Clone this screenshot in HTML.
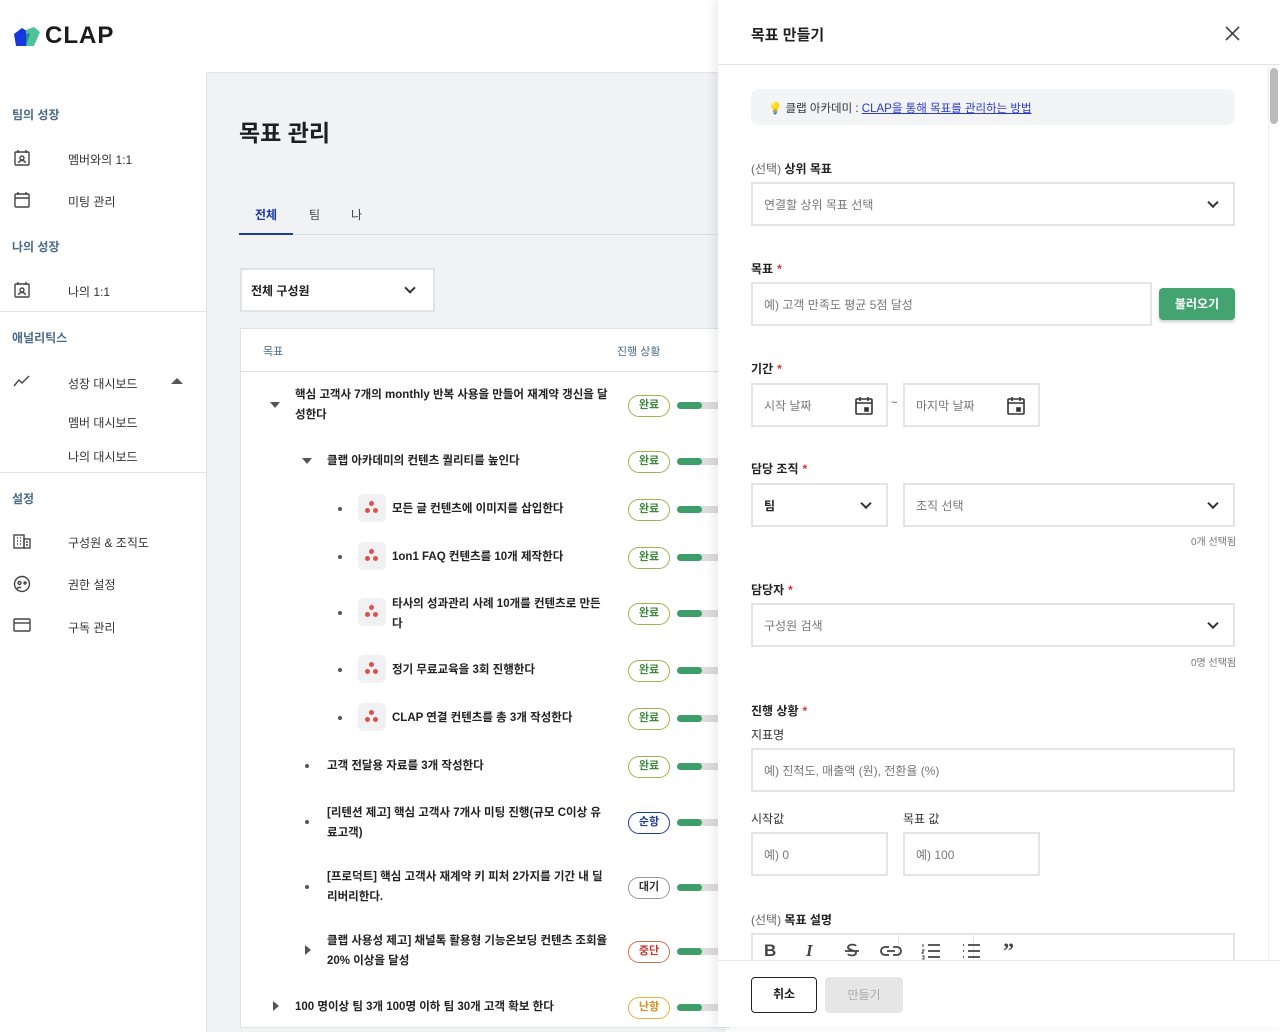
<!DOCTYPE html>
<html><head><meta charset="utf-8"><style>
*{margin:0;padding:0;box-sizing:border-box}
body{width:1280px;height:1027px;overflow:hidden;position:relative;background:#fff;font-family:"Liberation Sans","Noto Sans CJK KR",sans-serif;color:#222}
.a{position:absolute;white-space:nowrap}
.sec{font-size:12px;font-weight:bold;color:#4a6a8a;left:12px}
.nav{font-size:12px;color:#333;left:68px}
.ic{position:absolute;left:13px}
.t{font-size:11.5px;font-weight:bold;color:#222}
.badge{position:absolute;left:628px;width:42px;height:22px;border:1.5px solid #9bb54a;border-radius:11px;font-size:11px;font-weight:bold;color:#3c8a3c;text-align:center;line-height:19px;margin-top:2px}
.bar{position:absolute;left:677px;width:50px;height:7px;border-radius:4px;background:#ddd;margin-top:1px}
.bar::before{content:"";position:absolute;left:0;top:0;width:25px;height:7px;border-radius:4px;background:#3e9e6a}
.dot{position:absolute;width:4px;height:4px;border-radius:2px;background:#555}
.tri{position:absolute;width:0;height:0;border-left:5px solid transparent;border-right:5px solid transparent;border-top:6px solid #555}
.tri-r{position:absolute;width:0;height:0;border-top:5px solid transparent;border-bottom:5px solid transparent;border-left:6px solid #555}
.kr{position:absolute;left:358px;width:28px;height:28px;border-radius:6px;background:#f1f1f3}
.kr i{position:absolute;width:5px;height:5px;border-radius:3px;background:#d9534f}
.lbl{font-size:12px;font-weight:bold;color:#222;left:751px}
.lbl s{text-decoration:none;color:#d33;margin-left:4px}
.lbl em{font-style:normal;font-weight:normal;color:#666}
.box{position:absolute;border:2px solid #e3e4e6;background:#fff;font-size:12px;color:#777;padding-left:11px;display:flex;align-items:center}
.chev{position:absolute;right:16px;top:50%;width:8px;height:8px;border-right:2px solid #333;border-bottom:2px solid #333;transform:translateY(-70%) rotate(45deg)}
.cal{position:absolute;right:12px;top:11px}
.hint{font-size:10px;color:#777}
</style></head><body>

<!-- sidebar -->
<svg class="a" style="left:12px;top:26px" width="30" height="22" viewBox="0 0 30 22"><path d="M2 8 L10 2 L18 7 L14 20 L4 20 Z" fill="#1537e0"/><path d="M14 4 L22 1 L28 6 L22 20 L14 20 Z" fill="#4fc29a"/><path d="M14 8 L18 7 L14 20 Z" fill="#1a8f7a"/></svg>
<div class="a" style="left:45px;top:22px;font-size:24px;font-weight:bold;color:#1b1b1b;letter-spacing:1px">CLAP</div>

<div class="a sec" style="top:106px">팀의 성장</div>
<svg class="ic" style="top:149px" width="18" height="18" viewBox="0 0 18 18" fill="none" stroke="#444" stroke-width="1.4"><rect x="2" y="3" width="14" height="13" rx="1"/><path d="M5 1v3M13 1v3"/><circle cx="9" cy="9" r="2"/><path d="M5.5 14c.5-2 2-2.5 3.5-2.5s3 .5 3.5 2.5"/></svg>
<div class="a nav" style="top:151px">멤버와의 1:1</div>
<svg class="ic" style="top:191px" width="18" height="18" viewBox="0 0 18 18" fill="none" stroke="#444" stroke-width="1.4"><rect x="2" y="3" width="14" height="13" rx="1"/><path d="M5 1v3M13 1v3M2 7h14"/></svg>
<div class="a nav" style="top:193px">미팅 관리</div>
<div class="a sec" style="top:238px">나의 성장</div>
<svg class="ic" style="top:281px" width="18" height="18" viewBox="0 0 18 18" fill="none" stroke="#444" stroke-width="1.4"><rect x="2" y="3" width="14" height="13" rx="1"/><path d="M5 1v3M13 1v3"/><circle cx="9" cy="9" r="2"/><path d="M5.5 14c.5-2 2-2.5 3.5-2.5s3 .5 3.5 2.5"/></svg>
<div class="a nav" style="top:283px">나의 1:1</div>
<div class="a" style="left:0;top:311px;width:206px;height:1px;background:#e3e3e3"></div>
<div class="a sec" style="top:329px">애널리틱스</div>
<svg class="ic" style="top:374px" width="18" height="14" viewBox="0 0 18 14" fill="none" stroke="#444" stroke-width="1.4"><path d="M1 12 L6 6 L9 9 L16 2"/></svg>
<div class="a nav" style="top:375px">성장 대시보드</div>
<div class="a" style="left:171px;top:378px;width:0;height:0;border-left:6px solid transparent;border-right:6px solid transparent;border-bottom:6px solid #555"></div>
<div class="a nav" style="top:414px">멤버 대시보드</div>
<div class="a nav" style="top:448px">나의 대시보드</div>
<div class="a" style="left:0;top:472px;width:206px;height:1px;background:#e3e3e3"></div>
<div class="a sec" style="top:490px">설정</div>
<svg class="ic" style="top:533px" width="18" height="16" viewBox="0 0 18 16" fill="none" stroke="#444" stroke-width="1.4"><rect x="1" y="2" width="10" height="13"/><rect x="11" y="6" width="6" height="9"/><path d="M4 5h1M7 5h1M4 8h1M7 8h1M4 11h1M7 11h1M13 9h2M13 12h2"/></svg>
<div class="a nav" style="top:534px">구성원 &amp; 조직도</div>
<svg class="ic" style="top:575px" width="18" height="18" viewBox="0 0 18 18" fill="none" stroke="#444" stroke-width="1.4"><circle cx="9" cy="9" r="7.5"/><circle cx="6.5" cy="8" r="1.5"/><circle cx="12" cy="8" r="1"/><path d="M4 14c1-2 3-2 4-1"/></svg>
<div class="a nav" style="top:576px">권한 설정</div>
<svg class="ic" style="top:618px" width="18" height="14" viewBox="0 0 18 14" fill="none" stroke="#444" stroke-width="1.4"><rect x="1" y="1" width="16" height="12" rx="1"/><path d="M1 5h16"/></svg>
<div class="a nav" style="top:619px">구독 관리</div>

<!-- main -->
<div class="a" style="left:206px;top:72px;width:520px;height:960px;background:#f1f2f4;border-left:1px solid #e3e3e3;border-top:1px solid #e3e3e3"></div>
<div class="a" style="left:239px;top:114px;font-size:23px;font-weight:bold;color:#1f1f1f">목표 관리</div>
<div class="a" style="left:239px;top:234px;width:490px;height:1px;background:#dcdde0"></div>
<div class="a" style="left:239px;top:233px;width:54px;height:2px;background:#1a3aa8"></div>
<div class="a" style="left:255px;top:206px;font-size:12px;font-weight:bold;color:#1a3aa8">전체</div>
<div class="a" style="left:309px;top:206px;font-size:12px;color:#444">팀</div>
<div class="a" style="left:351px;top:206px;font-size:12px;color:#444">나</div>
<div class="a" style="left:240px;top:268px;width:195px;height:44px;background:#fff;border:2px solid #e1e2e4"></div>
<div class="a" style="left:251px;top:282px;font-size:12px;font-weight:bold">전체 구성원</div>
<div class="a" style="left:406px;top:284px;width:8px;height:8px;border-right:2px solid #333;border-bottom:2px solid #333;transform:rotate(45deg)"></div>
<div class="a" style="left:240px;top:328px;width:490px;height:700px;background:#fff;border:1px solid #e1e2e4"></div>
<div class="a" style="left:240px;top:371px;width:490px;height:1px;background:#e1e2e4"></div>
<div class="a" style="left:263px;top:343px;font-size:11px;color:#4a6a8a">목표</div>
<div class="a" style="left:617px;top:343px;font-size:11px;color:#4a6a8a">진행 상황</div>

<div class="tri" style="left:270px;top:402px"></div>
<div class="a t" style="left:295px;top:385px;line-height:20px">핵심 고객사 7개의 monthly 반복 사용을 만들어 재계약 갱신을 달<br>성한다</div>
<div class="badge" style="top:393px">완료</div><div class="bar" style="top:401px"></div>

<div class="tri" style="left:302px;top:458px"></div>
<div class="a t" style="left:327px;top:452px">클랩 아카데미의 컨텐츠 퀄리티를 높인다</div>
<div class="badge" style="top:449px">완료</div><div class="bar" style="top:457px"></div>

<div class="dot" style="left:338px;top:507px"></div><div class="kr" style="top:494px"><i style="left:11px;top:7px"></i><i style="left:7px;top:14px"></i><i style="left:15px;top:14px"></i></div>
<div class="a t" style="left:392px;top:500px">모든 글 컨텐츠에 이미지를 삽입한다</div>
<div class="badge" style="top:497px">완료</div><div class="bar" style="top:505px"></div>

<div class="dot" style="left:338px;top:555px"></div><div class="kr" style="top:542px"><i style="left:11px;top:7px"></i><i style="left:7px;top:14px"></i><i style="left:15px;top:14px"></i></div>
<div class="a t" style="left:392px;top:548px">1on1 FAQ 컨텐츠를 10개 제작한다</div>
<div class="badge" style="top:545px">완료</div><div class="bar" style="top:553px"></div>

<div class="dot" style="left:338px;top:611px"></div><div class="kr" style="top:598px"><i style="left:11px;top:7px"></i><i style="left:7px;top:14px"></i><i style="left:15px;top:14px"></i></div>
<div class="a t" style="left:392px;top:594px;line-height:20px">타사의 성과관리 사례 10개를 컨텐츠로 만든<br>다</div>
<div class="badge" style="top:601px">완료</div><div class="bar" style="top:609px"></div>

<div class="dot" style="left:338px;top:668px"></div><div class="kr" style="top:655px"><i style="left:11px;top:7px"></i><i style="left:7px;top:14px"></i><i style="left:15px;top:14px"></i></div>
<div class="a t" style="left:392px;top:661px">정기 무료교육을 3회 진행한다</div>
<div class="badge" style="top:658px">완료</div><div class="bar" style="top:666px"></div>

<div class="dot" style="left:338px;top:716px"></div><div class="kr" style="top:703px"><i style="left:11px;top:7px"></i><i style="left:7px;top:14px"></i><i style="left:15px;top:14px"></i></div>
<div class="a t" style="left:392px;top:709px">CLAP 연결 컨텐츠를 총 3개 작성한다</div>
<div class="badge" style="top:706px">완료</div><div class="bar" style="top:714px"></div>

<div class="dot" style="left:305px;top:764px"></div>
<div class="a t" style="left:327px;top:757px">고객 전달용 자료를 3개 작성한다</div>
<div class="badge" style="top:754px">완료</div><div class="bar" style="top:762px"></div>

<div class="dot" style="left:305px;top:820px"></div>
<div class="a t" style="left:327px;top:803px;line-height:20px">[리텐션 제고] 핵심 고객사 7개사 미팅 진행(규모 C이상 유<br>료고객)</div>
<div class="badge" style="top:810px;border-color:#1a3aa8;color:#1a3aa8">순항</div><div class="bar" style="top:818px"></div>

<div class="dot" style="left:305px;top:885px"></div>
<div class="a t" style="left:327px;top:867px;line-height:20px">[프로덕트] 핵심 고객사 재계약 키 피처 2가지를 기간 내 딜<br>리버리한다.</div>
<div class="badge" style="top:875px;border-color:#999;color:#333">대기</div><div class="bar" style="top:883px"></div>

<div class="tri-r" style="left:305px;top:945px"></div>
<div class="a t" style="left:327px;top:931px;line-height:20px">클랩 사용성 제고] 채널톡 활용형 기능온보딩 컨텐츠 조회율<br>20% 이상을 달성</div>
<div class="badge" style="top:939px;border-color:#d0704a;color:#c0392b">중단</div><div class="bar" style="top:947px"></div>

<div class="tri-r" style="left:273px;top:1001px"></div>
<div class="a t" style="left:295px;top:998px">100 명이상 팀 3개 100명 이하 팀 30개 고객 확보 한다</div>
<div class="badge" style="top:995px;border-color:#e6b040;color:#d09020">난항</div><div class="bar" style="top:1003px"></div>

<!-- drawer -->
<div class="a" style="left:718px;top:0;width:562px;height:1027px;background:#fff;box-shadow:-4px 0 10px rgba(0,0,0,.08)"></div>
<div class="a" style="left:751px;top:24px;font-size:15px;font-weight:bold">목표 만들기</div>
<svg class="a" style="left:1225px;top:26px" width="15" height="15" viewBox="0 0 15 15" stroke="#444" stroke-width="1.6"><path d="M1 1L14 14M14 1L1 14"/></svg>
<div class="a" style="left:718px;top:64px;width:562px;height:1px;background:#e3e3e3"></div>
<div class="a" style="left:1270px;top:68px;width:8px;height:56px;border-radius:4px;background:#bbb"></div>
<div class="a" style="left:1268px;top:64px;width:1px;height:896px;background:#eee"></div>

<div class="a" style="left:751px;top:89px;width:484px;height:36px;background:#f3f4f6;border-radius:8px"></div>
<div class="a" style="left:768px;top:100px;font-size:11.5px;color:#333"><span style="color:#e8c040">💡</span> 클랩 아카데미 : <span style="color:#2a3ad0;text-decoration:underline">CLAP을 통해 목표를 관리하는 방법</span></div>

<div class="a lbl" style="top:160px"><em>(선택)</em> 상위 목표</div>
<div class="box" style="left:751px;top:182px;width:484px;height:44px">연결할 상위 목표 선택<span class="chev"></span></div>

<div class="a lbl" style="top:260px">목표<s>*</s></div>
<div class="box" style="left:751px;top:282px;width:401px;height:44px">예) 고객 만족도 평균 5점 달성</div>
<div class="a" style="left:1159px;top:288px;width:76px;height:32px;background:#43a472;border-radius:4px;color:#fff;font-size:12px;font-weight:bold;text-align:center;line-height:32px;box-shadow:0 2px 3px rgba(0,0,0,.2)">불러오기</div>

<div class="a lbl" style="top:360px">기간<s>*</s></div>
<div class="box" style="left:751px;top:383px;width:137px;height:44px">시작 날짜<svg class="cal" width="20" height="20" viewBox="0 0 20 20" fill="none" stroke="#333" stroke-width="1.6"><rect x="2" y="3" width="16" height="15" rx="1"/><path d="M6 1v4M14 1v4M2 7h16"/><rect x="11" y="12" width="3" height="3" fill="#333"/></svg></div>
<div class="a" style="left:891px;top:397px;font-size:11px;color:#555">~</div>
<div class="box" style="left:903px;top:383px;width:137px;height:44px">마지막 날짜<svg class="cal" width="20" height="20" viewBox="0 0 20 20" fill="none" stroke="#333" stroke-width="1.6"><rect x="2" y="3" width="16" height="15" rx="1"/><path d="M6 1v4M14 1v4M2 7h16"/><rect x="11" y="12" width="3" height="3" fill="#333"/></svg></div>

<div class="a lbl" style="top:460px">담당 조직<s>*</s></div>
<div class="box" style="left:751px;top:483px;width:137px;height:44px;color:#222;font-weight:bold">팀<span class="chev"></span></div>
<div class="box" style="left:903px;top:483px;width:332px;height:44px">조직 선택<span class="chev"></span></div>
<div class="a hint" style="left:1191px;top:533px">0개 선택됨</div>

<div class="a lbl" style="top:581px">담당자<s>*</s></div>
<div class="box" style="left:751px;top:603px;width:484px;height:44px">구성원 검색<span class="chev"></span></div>
<div class="a hint" style="left:1191px;top:654px">0명 선택됨</div>

<div class="a lbl" style="top:702px">진행 상황<s>*</s></div>
<div class="a" style="left:751px;top:726px;font-size:12px;color:#333">지표명</div>
<div class="box" style="left:751px;top:748px;width:484px;height:44px">예) 진척도, 매출액 (원), 전환율 (%)</div>

<div class="a" style="left:751px;top:810px;font-size:12px;color:#333">시작값</div>
<div class="a" style="left:903px;top:810px;font-size:12px;color:#333">목표 값</div>
<div class="box" style="left:751px;top:832px;width:137px;height:44px">예) 0</div>
<div class="box" style="left:903px;top:832px;width:137px;height:44px">예) 100</div>

<div class="a lbl" style="top:911px"><em>(선택)</em> 목표 설명</div>
<div class="a" style="left:751px;top:933px;width:484px;height:40px;border:2px solid #e3e4e6;border-bottom:none"></div>
<div class="a" style="left:898px;top:935px;width:1px;height:25px;background:#e3e4e6"></div>
<div class="a" style="left:973px;top:935px;width:1px;height:25px;background:#e3e4e6"></div>
<div class="a" style="left:764px;top:941px;font-size:17px;font-weight:bold;color:#444">B</div>
<div class="a" style="left:806px;top:941px;font-size:17px;font-weight:bold;font-style:italic;color:#444;font-family:'Liberation Serif',serif">I</div>
<svg class="a" style="left:843px;top:942px" width="18" height="18" viewBox="0 0 18 18" fill="none" stroke="#444" stroke-width="1.8"><path d="M13 4c-1-2-7-2-8 1s8 3 8 6-7 3-8 1M2 9h14"/></svg>
<svg class="a" style="left:880px;top:945px" width="22" height="12" viewBox="0 0 22 12" fill="none" stroke="#444" stroke-width="1.8"><path d="M9 2H5a4 4 0 0 0 0 8h4M13 2h4a4 4 0 0 1 0 8h-4M7 6h8"/></svg>
<svg class="a" style="left:921px;top:943px" width="20" height="17" viewBox="0 0 20 17" fill="none" stroke="#444" stroke-width="1.8"><path d="M7 2h12M7 8h12M7 14h12"/><path d="M2 1v3M1 7h2l-2 3h2M1 13h2v3H1" stroke-width="1"/></svg>
<svg class="a" style="left:961px;top:943px" width="20" height="17" viewBox="0 0 20 17" fill="none" stroke="#444" stroke-width="1.8"><path d="M7 2h12M7 8h12M7 14h12M2 2h1M2 8h1M2 14h1"/></svg>
<div class="a" style="left:1003px;top:938px;font-size:22px;font-weight:bold;color:#444;font-family:'Liberation Serif',serif">”</div>

<div class="a" style="left:718px;top:960px;width:562px;height:67px;background:#fff;border-top:1px solid #e8e8e8"></div>
<div class="a" style="left:751px;top:977px;width:66px;height:36px;border:1.5px solid #222;border-radius:4px;font-size:12px;font-weight:bold;text-align:center;line-height:33px">취소</div>
<div class="a" style="left:825px;top:977px;width:78px;height:36px;background:#e6e6e6;border-radius:4px;font-size:12px;color:#aaa;text-align:center;line-height:36px">만들기</div>
</body></html>
